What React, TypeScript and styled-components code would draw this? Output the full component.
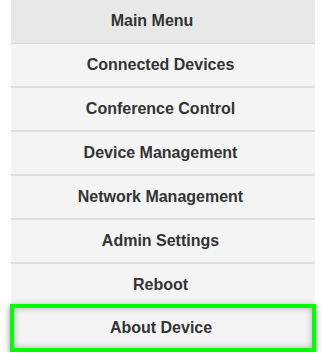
import styled, { createGlobalStyle } from "styled-components";

const GlobalStyle = createGlobalStyle`
body {
    margin: 0;
    background: #fff;
    font-family: "Liberation Sans", Arial, sans-serif;
}
`;

const items = [
    "Connected Devices",
    "Conference Control",
    "Device Management",
    "Network Management",
    "Admin Settings",
    "Reboot",
    "About Device",
];

const App = function() {
    const focused = "About Device";

    return ( <>
        <GlobalStyle />
        <MenuStyled>
            <div className="menu-title">Main Menu</div>
            {items.map((label) => (
                <MenuItem key={label} $focused={label === focused}>{label}</MenuItem>
            ))}
        </MenuStyled>
    </>
    )
}

export default App;

const MenuStyled = styled.nav`
width: 304px;
margin-left: 11px;
display: flex;
flex-direction: column;

.menu-title {
    height: 41px;
    padding: 0 22px 2px 0;
    background: #e8e8e8;
    border-bottom: 1px solid #d8d8d8;
    display: flex;
    align-items: center;
    justify-content: center;
    color: #333;
    font-weight: 700;
    font-size: 16px;
}
`

const MenuItem = styled.div<{ $focused?: boolean }>`
height: 41px;
padding: 0 5px 1px 0;
background: #f4f4f4;
border-bottom: 2px solid #dedede;
display: flex;
align-items: center;
justify-content: center;
color: #333;
font-weight: 700;
font-size: 16px;

${({ $focused }) => $focused && `
    height: 40px;
    padding: 0 4px 0 0;
    margin: -4px -1px 0;
    border: 4px solid #00ff00;
    box-shadow: 0 2px 6px rgba(0, 0, 0, 0.45), inset 0 0 6px rgba(0, 0, 0, 0.3);
    position: relative;
`}
`
